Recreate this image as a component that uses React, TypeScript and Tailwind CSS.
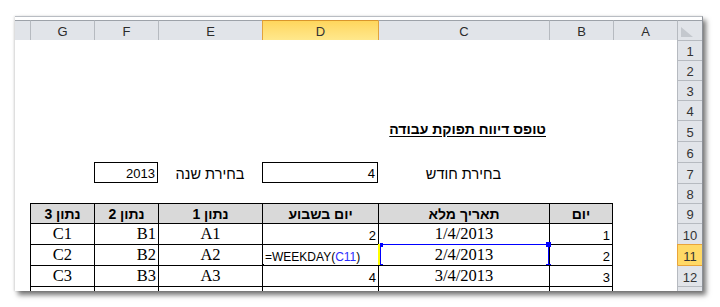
import React from "react";

type Col = "RH" | "A" | "B" | "C" | "D" | "E" | "F" | "G" | "S";
const COLS: Col[] = ["RH", "A", "B", "C", "D", "E", "F", "G", "S"];
const TABLE_COLS: Col[] = ["B", "C", "D", "E", "F", "G"];

const ROW_H = [
  "h-[20px]", "h-[20px]", "h-[20px]", "h-[20px]", "h-[21px]", "h-[21px]", "h-[21px]",
  "h-[20px]", "h-[20px]", "h-[21px]", "h-[21px]", "h-[21px]", "h-[5px]",
];

const sans = "font-['Liberation_Sans',Arial,sans-serif]";
const serif = "font-['Liberation_Serif','Times_New_Roman',serif]";

type CellDef = { text: React.ReactNode; align: "left" | "right" | "center"; cls?: string };

const num = (t: string): CellDef => ({ text: t, align: "right", cls: `${sans} text-[13px]` });
const ser = (t: string, align: "right" | "center" = "center"): CellDef => ({
  text: t,
  align,
  cls: `${serif} text-[16.5px]`,
});
const head = (t: string): CellDef => ({ text: t, align: "center", cls: `${sans} text-[14px] font-bold` });

const DATA: Record<number, Partial<Record<Col, CellDef>>> = {
  5: {
    C: {
      text: <span className="underline underline-offset-[2px]">טופס דיווח תפוקת עבודה</span>,
      align: "right",
      cls: `${sans} text-[14px] font-bold pb-[5px] pr-[3px]`,
    },
  },
  7: {
    C: { text: "בחירת חודש", align: "center", cls: `${sans} text-[14.5px]` },
    D: { text: "4", align: "right", cls: `${sans} text-[13px]` },
    E: { text: "בחירת שנה", align: "center", cls: `${sans} text-[14.5px]` },
    F: { text: "2013", align: "right", cls: `${sans} text-[13px]` },
  },
  9: {
    B: head("יום"),
    C: head("תאריך מלא"),
    D: head("יום בשבוע"),
    E: head("נתון 1"),
    F: head("נתון 2"),
    G: head("נתון 3"),
  },
  10: { B: num("1"), C: ser("1/4/2013"), D: num("2"), E: ser("A1"), F: ser("B1", "right"), G: ser("C1") },
  11: {
    B: num("2"),
    C: ser("2/4/2013"),
    D: {
      text: (
        <span dir="ltr">
          =WEEKDAY(<span className="text-[#2c2cff]">C11</span>)
        </span>
      ),
      align: "left",
      cls: `${sans} text-[12px] pl-[2px]`,
    },
    E: ser("A2"),
    F: ser("B2", "right"),
    G: ser("C2"),
  },
  12: { B: num("3"), C: ser("3/4/2013"), D: num("4"), E: ser("A3"), F: ser("B3", "right"), G: ser("C3") },
};

const alignCls = { left: "text-left", right: "text-right", center: "text-center" };

const ColHeader: React.FC<{ col: Col }> = ({ col }) => {
  if (col === "RH") {
    return (
      <div className="relative h-[20px] bg-[#e1e4e9] border-t border-t-[#9da2a9] border-l border-l-[#b6bac0]">
        <svg className="absolute left-[3px] top-[6px]" width="12" height="10" viewBox="0 0 12 10">
          <polygon points="0,0 0,10 12,10" fill="#c4c8ce" />
        </svg>
      </div>
    );
  }
  if (col === "S") {
    return <div className="h-[20px] bg-[#e1e4e9] border-t border-t-[#9da2a9]"></div>;
  }
  const active = col === "D";
  return (
    <div
      className={`h-[20px] flex items-end justify-center pb-[2px] border-t border-l text-[13px] leading-none ${sans} ${
        active
          ? "bg-gradient-to-b from-[#ffd65c] to-[#ffe88c] border-t-[#d9962c] border-l-[#e2a33c] text-[#333]"
          : col === "C"
          ? "bg-[#e1e4e9] border-t-[#9da2a9] border-l-[#e2a33c] text-[#2b2b2b]"
          : "bg-[#e1e4e9] border-t-[#9da2a9] border-l-[#b6bac0] text-[#2b2b2b]"
      }`}
    >
      {col}
    </div>
  );
};

const Cell: React.FC<{ row: number; col: Col }> = ({ row, col }) => {
  const h = ROW_H[row - 1];
  if (col === "RH") {
    const active = row === 11;
    return (
      <div
        className={`${h} flex items-end justify-center pb-[2px] border-t border-l text-[13px] leading-none overflow-hidden ${sans} ${
          active
            ? "bg-[#ffd966] border-t-[#e9a43a] border-l-[#e9a43a] text-[#333]"
            : row === 12
            ? "bg-[#e1e4e9] border-t-[#e9a43a] border-l-[#b6bac0] text-[#333]"
            : "bg-[#e1e4e9] border-t-[#b6bac0] border-l-[#b6bac0] text-[#333]"
        }`}
      >
        {row < 13 ? row : ""}
      </div>
    );
  }

  const def = DATA[row]?.[col];
  const inTable = row >= 9 && TABLE_COLS.includes(col);
  const boxed = row === 7 && (col === "D" || col === "F");

  let border = "";
  if (inTable) border = "border-t border-l border-black";
  if (inTable && col === "B") border += " border-r";
  if (boxed) border = "border border-black";
  const bg = row === 9 && inTable ? "bg-[#d9d9d9]" : "bg-white";

  return (
    <div className={`${h} relative flex items-end ${border} ${bg} ${row === 13 ? "overflow-hidden" : ""}`}>
      {def && (
        <span
          className={`block w-full whitespace-nowrap leading-none pb-[2px] px-[2px] text-black ${alignCls[def.align]} ${
            def.cls ?? ""
          }`}
        >
          {def.text}
        </span>
      )}
      {row === 11 && col === "D" && (
        <div className="absolute left-[-2px] bottom-[-2px] w-[3px] h-[3px] bg-black"></div>
      )}
      {row === 11 && col === "C" && (
        <>
          <div className="absolute left-[1px] right-0 top-[-1px] h-[23px] border border-[#0000ff]"></div>
          <div className="absolute left-[-1px] top-[-1px] w-[2px] h-[23px] bg-[#ffff00]"></div>
          <div className="absolute left-[1px] top-[-2px] w-[3px] h-[4px] bg-[#0000ff]"></div>
          <div className="absolute left-[1px] bottom-[-3px] w-[3px] h-[4px] bg-[#0000ff]"></div>
          <div className="absolute right-[-2px] top-[-3px] w-[5px] h-[5px] bg-[#0000ff]"></div>
          <div className="absolute right-[-2px] bottom-[-4px] w-[5px] h-[5px] bg-[#0000ff]"></div>
        </>
      )}
    </div>
  );
};

export default function App() {
  const rows = Array.from({ length: 13 }, (_, i) => i + 1);
  return (
    <div className="w-[720px] h-[307px] bg-white pl-[15px] pt-[16px] overflow-hidden">
      <div
        dir="rtl"
        className="w-[688px] bg-white border-t border-t-[#b9bdc3] border-r border-r-[#8d9198] pt-[3px] shadow-[3px_4px_5px_rgba(0,0,0,0.55),-1px_0_2px_rgba(0,0,0,0.12)]"
      >
        <div className="grid grid-cols-[25px_64px_64px_171px_116px_104px_64px_64px_15px]">
          {COLS.map((c) => (
            <ColHeader key={`h-${c}`} col={c} />
          ))}
          {rows.map((r) => COLS.map((c) => <Cell key={`${r}-${c}`} row={r} col={c} />))}
        </div>
      </div>
    </div>
  );
}
